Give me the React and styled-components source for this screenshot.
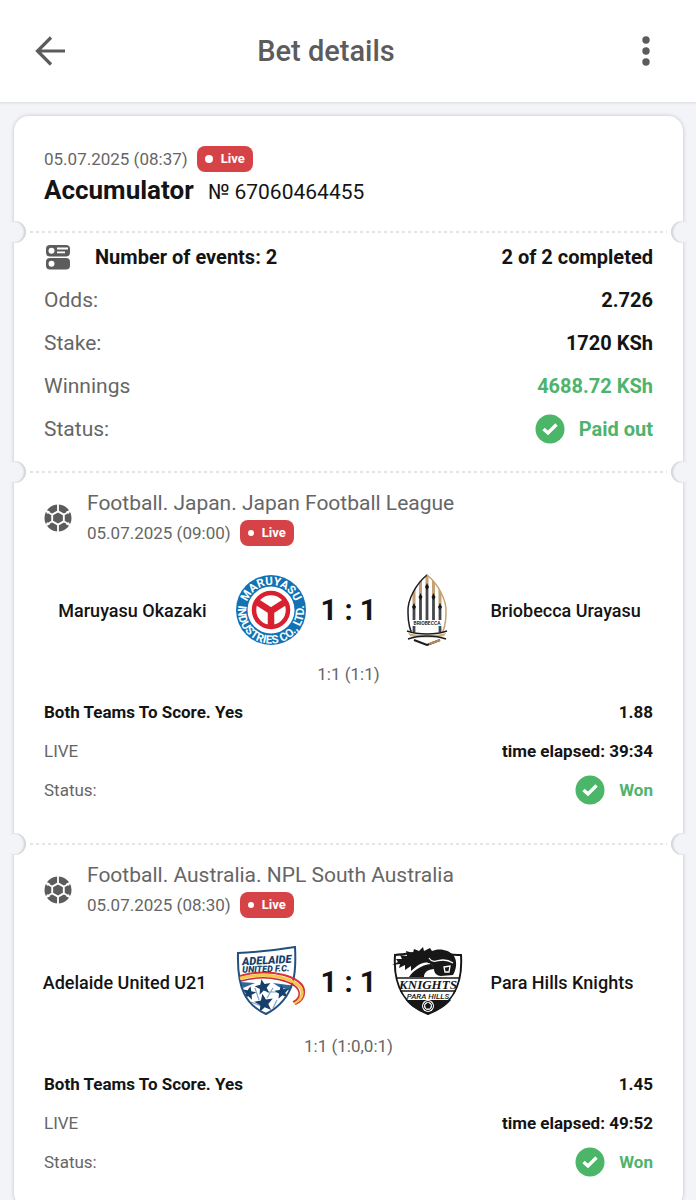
import styled, { createGlobalStyle } from 'styled-components';

const GlobalStyle = createGlobalStyle`
  *, *::before, *::after {
    box-sizing: border-box;
  }

  body {
    margin: 0;
    background: #f3f4f8;
    color: #141414;
    font-family: Roboto, sans-serif;
    font-size: 21px;
  }

  h1, h2, p, dl, dd {
    margin: 0;
  }
`

const Header = styled.header`
  display: flex;
  align-items: center;
  justify-content: space-between;
  height: 103px;
  padding: 0 30px;
  background: #fff;
  border-bottom: 1px solid #e2e3e6;
  box-shadow: 0 1px 2px rgba(0, 0, 0, 0.06);
`

const Title = styled.h1`
  font-size: 29px;
  font-weight: 500;
  line-height: 40px;
  color: #5c5c5c;
`

const IconButton = styled.button`
  display: flex;
  align-items: center;
  justify-content: center;
  width: 40px;
  height: 40px;
  padding: 0;
  border: 0;
  background: none;
  color: #5c5c5c;
  cursor: pointer;
`

const MenuButton = styled(IconButton)`
  justify-content: flex-end;
  width: 84px;
  padding-right: 15px;
`

const Ticket = styled.main`
  margin: 13px 13px 0 14px;
  padding-bottom: 27px;
  background: #fff;
  border-radius: 15px;
  box-shadow: 0 0 4px rgba(0, 0, 0, 0.2);
`

const Section = styled.section`
  padding: ${props => props.$top}px 30px 0;
`

const Divider = styled.div`
  position: relative;
  height: 2px;
  margin: ${props => props.$gap}px 0 0;
  background: repeating-linear-gradient(90deg, #e4e5e8 0 3px, transparent 3px 6px) 16px 0 / calc(100% - 32px) 2px no-repeat;

  &::before, &::after {
    content: '';
    position: absolute;
    top: -10px;
    width: 22px;
    height: 22px;
    border-radius: 50%;
    background: #f3f4f8;
  }

  &::before {
    left: -10px;
    box-shadow: inset -2px 0 2px rgba(0, 0, 0, 0.14);
  }

  &::after {
    right: -10px;
    box-shadow: inset 2px 0 2px rgba(0, 0, 0, 0.14);
  }
`

const DateLine = styled.div`
  display: flex;
  align-items: center;
  gap: 9px;
  font-size: 17px;
  line-height: 30px;
  color: #666;
`

const LiveBadge = styled.span`
  display: flex;
  align-items: center;
  gap: 8px;
  height: 26px;
  padding: 0 8px;
  border-radius: 8px;
  background: #d64347;
  color: #fff;
  font-size: 13px;
  font-weight: 700;

  &::before {
    content: '';
    width: ${props => props.$dot}px;
    height: ${props => props.$dot}px;
    border-radius: 50%;
    background: #fff;
  }
`

const BetTitle = styled.div`
  display: flex;
  align-items: baseline;
  gap: 14px;
  line-height: 32px;
`

const BetType = styled.h2`
  font-size: 26px;
  font-weight: 700;
`

const Row = styled.div`
  display: flex;
  align-items: center;
  justify-content: space-between;
  height: 43px;
`

const Label = styled.dt`
  display: flex;
  align-items: center;
  gap: 23px;
  color: #666;
`

const StrongLabel = styled(Label)`
  font-size: 20px;
  font-weight: 700;
  color: #141414;
`

const Value = styled.dd`
  display: flex;
  align-items: center;
  gap: 14px;
  font-size: 20px;
  font-weight: 700;
  color: ${props => props.$green ? '#4fb36c' : '#141414'};
`

const EventRows = styled.dl`
  ${Row} {
    height: 39px;
  }

  ${Label}, ${Value} {
    font-size: 17px;
  }
`

const EventHead = styled.div`
  display: grid;
  grid-template-columns: 28px 1fr;
  align-items: center;
  gap: 15px;
`

const League = styled.h2`
  font-size: 21px;
  font-weight: 400;
  line-height: 30px;
  color: #666;
`

const Match = styled.div`
  display: grid;
  grid-template-columns: minmax(0, 1fr) 72px 84px 72px minmax(0, 1fr);
  align-items: center;
  height: 72px;
  margin-top: 26px;
`

const Team = styled.span`
  display: flex;
  justify-content: ${props => props.$away ? 'flex-start' : 'flex-end'};
  padding: ${props => props.$away ? '0 0 0 28px' : '0 28px 0 0'};
  font-size: 18px;
  font-weight: 500;
  white-space: nowrap;
`

const Score = styled.span`
  text-align: center;
  font-size: 29px;
  font-weight: 700;
`

const Periods = styled.p`
  padding: 17px 0 7px;
  font-size: 17px;
  line-height: 22px;
  text-align: center;
  color: #666;
`

const BackIcon = () => (
  <svg width="32" height="32" viewBox="0 0 32 32" fill="none" stroke="currentColor" strokeWidth="3.200">
    <path d="M31 16H4M17 2.500L3.500 16L17 29.500" />
  </svg>
)

const MoreIcon = () => (
  <svg width="10" height="32" viewBox="0 0 10 32" fill="currentColor">
    <circle cx="5" cy="5" r="3.700" />
    <circle cx="5" cy="16" r="3.700" />
    <circle cx="5" cy="27" r="3.700" />
  </svg>
)

const EventsIcon = () => (
  <svg width="28" height="28" viewBox="0 0 28 28" fill="#5c5c5c">
    <rect x="2" y="2" width="24" height="11.500" rx="4" />
    <rect x="2" y="15" width="24" height="11.500" rx="4" />
    <circle cx="7.500" cy="7.700" r="3" fill="#fff" />
    <circle cx="7.500" cy="20.700" r="3" fill="#fff" />
    <path d="M13 5.500H24M13 9.300H21" stroke="#fff" strokeWidth="1.800" />
  </svg>
)

const CheckIcon = () => (
  <svg width="30" height="30" viewBox="0 0 30 30">
    <circle cx="15" cy="15" r="14.500" fill="#4bb568" />
    <path d="M8.500 15L13 19L21.500 10.500" fill="none" stroke="#fff" strokeWidth="3.400" />
  </svg>
)

const BallIcon = () => (
  <svg width="28" height="28" viewBox="0 0 28 28">
    <circle cx="14" cy="14" r="13.500" fill="#5c5c5c" />
    <path
      d="M14 0V7M14 21V28M1.900 7L7.900 10.500M26.100 7L20.100 10.500M1.900 21L7.900 17.500M26.100 21L20.100 17.500"
      stroke="#fff"
      strokeWidth="1.800"
    />
    <path d="M2 6L6 7.500L3 10ZM26 6L22 7.500L25 10ZM2 22L6 20.500L3 18ZM26 22L22 20.500L25 18Z" fill="#fff" />
    <path d="M14 7.300L19.800 10.600V17.400L14 20.700L8.200 17.400V10.600Z" fill="#5c5c5c" stroke="#fff" strokeWidth="1.900" />
  </svg>
)

const MaruyasuLogo = () => (
  <svg width="72" height="72" viewBox="0 0 72 72" fontFamily="Roboto" fontWeight="700" fill="#fff">
    <defs>
      <path id="maruyasu-top" d="M11 36A25 25 0 0 1 61 36" />
      <path id="maruyasu-bottom" d="M5.500 24A33 33 0 1 0 66.500 24" />
    </defs>
    <circle cx="36" cy="36" r="35" fill="#1272b4" />
    <circle cx="36" cy="36" r="23.500" />
    <circle cx="36" cy="36" r="17" fill="none" stroke="#d8202f" strokeWidth="4.500" />
    <path d="M36 36V53M36 37L22 28M36 37L50 28" stroke="#d8202f" strokeWidth="6.500" />
    <text fontSize="11.500" textAnchor="middle">
      <textPath href="#maruyasu-top" startOffset="50%">MARUYASU</textPath>
    </text>
    <text fontSize="11.500" textAnchor="middle">
      <textPath href="#maruyasu-bottom" startOffset="50%">INDUSTRIES CO., LTD.</textPath>
    </text>
  </svg>
)

const BriobeccaLogo = () => (
  <svg width="72" height="72" viewBox="0 0 72 72">
    <defs>
      <clipPath id="brio-shape">
        <path d="M36 0C46 9 56 25 55 39C54 55 50 65 36 72C22 65 18 55 17 39C16 25 26 9 36 0Z" />
      </clipPath>
    </defs>
    <g clipPath="url(#brio-shape)">
      <path d="M23 0V31M29.500 0V21M36 0V12M42.500 0V21M49 0V31" stroke="#c5a274" strokeWidth="3" />
      <path d="M23 32V58M29.500 23V50M36 12V50M42.500 23V50M49 32V58" stroke="#44474b" strokeWidth="2.800" />
      <path d="M23 29L25 33L23 36L21 33ZM29.500 19L31.500 23L29.500 26L27.500 23ZM36 9L38 13L36 16L34 13ZM42.500 19L44.500 23L42.500 26L40.500 23ZM49 29L51 33L49 36L47 33Z" fill="#17181a" />
      <rect x="16" y="46" width="40" height="6" fill="#fff" />
    </g>
    <path d="M36 1C26 9 16 25 17 39C17 48 19 57 23 64" fill="none" stroke="#1c1c1c" strokeWidth="1.500" />
    <path d="M36 1C46 9 56 25 55 39C55 48 53 57 49 64" fill="none" stroke="#c5a274" strokeWidth="1.500" />
    <text x="36" y="51" fontFamily="Roboto" fontSize="5" fontWeight="500" textAnchor="middle">BRIOBECCA</text>
    <path d="M16 56C28 61 44 61 56 56L53 62C43 66 29 66 19 62Z" fill="#fff" />
    <path d="M17 59C28 62 44 62 55 59L53 62C43 64 29 64 19 62Z" fill="#d2ae7c" />
    <path d="M16 57C27 61 45 61 56 57M17 65C28 61 44 61 55 65" fill="none" stroke="#1c1c1c" strokeWidth="1.500" />
    <path d="M23 66L36 71L49 66" fill="none" stroke="#1c1c1c" strokeWidth="2" />
    <path d="M38 70L49 66" stroke="#b98b5b" strokeWidth="2" />
  </svg>
)

const STAR = 'M0 -7L1.900 -2.300L7 -2.100L3 1.200L4.300 6L0 3.200L-4.300 6L-3 1.200L-7 -2.100L-1.900 -2.300Z'

const AdelaideLogo = () => (
  <svg width="72" height="72" viewBox="0 0 72 72">
    <defs>
      <clipPath id="adelaide-shield">
        <path d="M3 7C22 6 42 4 60 1C61 21 63 51 31 68C11 59 2 43 3 7Z" />
      </clipPath>
    </defs>
    <path d="M3 7C22 6 42 4 60 1C61 21 63 51 31 68C11 59 2 43 3 7Z" fill="#fff" />
    <g clipPath="url(#adelaide-shield)">
      <path d="M5 36L20 37L8 42ZM38 37L62 40L54 44L44 41ZM56 52L62 56L44 68L46 60ZM6 52L14 57L20 66Z" fill="#2f679c" />
      <path d="M20 42L24 54M38 42L32 52M42 54L38 62M46 46L32 46M16 56L26 60" stroke="#7fa6c8" strokeWidth="1.200" />
      <g fill="#173f6b">
        <path d={STAR} transform="translate(28 41) rotate(-12) scale(1.150)" />
        <path d={STAR} transform="translate(14 47) rotate(12)" />
        <path d={STAR} transform="translate(47 46) rotate(-8) scale(1.050)" />
        <path d={STAR} transform="translate(29 57) rotate(-10) scale(1.350)" />
      </g>
    </g>
    <path d="M3 7C22 6 42 4 60 1C61 21 63 51 31 68C11 59 2 43 3 7Z" fill="none" stroke="#23507c" strokeWidth="2" />
    <g fill="none">
      <path d="M5 30C35 21 68 31 69 44C70 51 66 56 60 58" stroke="#d8343b" strokeWidth="2" />
      <path d="M5 32.500C34 24 65 34 67 45C68 51 64 55 59 57" stroke="#f3c84b" strokeWidth="3" />
      <path d="M6 35C34 27 62 36 64 46C65 51 62 54 58 56" stroke="#c92c37" strokeWidth="1.500" />
    </g>
    <g fill="#173f6b" fontFamily="Roboto" fontWeight="900" fontStyle="italic" textAnchor="middle">
      <text x="32" y="18" fontSize="11" transform="rotate(-3 32 18)">ADELAIDE</text>
      <text x="31" y="26" fontSize="9" transform="rotate(-2 31 26)">UNITED F.C.</text>
    </g>
  </svg>
)

const KnightsLogo = () => (
  <svg width="72" height="72" viewBox="0 0 72 72">
    <path d="M4 9C18 8 28 6 37 6C48 6 58 9 70 9C72 40 60 60 37 68C14 60 2 40 4 9Z" fill="#fff" stroke="#171717" strokeWidth="2" />
    <path d="M5 32H69M9 45H65" stroke="#171717" strokeWidth="1.500" />
    <path d="M15 54H60C54 61 47 65 37 68C28 65 20 61 15 54Z" fill="#171717" />
    <path
      d="M1 19L7 16L5 13L11 13L9 9L16 10L15 5L22 7L23 3L28 5L32 1L33 5L39 2L41 5C47 2 58 3 63 10C66 15 66 22 62 29L50 30C46 30 43 27 43 23C40 15 33 15 26 20L20 25L20 20L14 24L14 19L8 22L9 18Z"
      fill="#171717"
    />
    <path d="M18 31C22 25 30 19 40 18L44 23C36 23 33 27 33 31Z" fill="#171717" />
    <path d="M38 12C42 18 46 14 52 14C56 14 59 15 62 17M53 21L59 20L58 26L54 26Z" fill="none" stroke="#fff" strokeWidth="1.300" />
    <circle cx="37" cy="60" r="6" fill="#fff" />
    <circle cx="37" cy="60" r="4.500" fill="none" stroke="#171717" />
    <path d="M37 56.500L40 59L39 62.500H35L34 59Z" fill="#171717" />
    <g fill="#171717" fontStyle="italic" textAnchor="middle">
      <text x="37" y="43" fontFamily="Liberation Serif" fontSize="13" fontWeight="700">KNIGHTS</text>
      <text x="37" y="53" fontFamily="Roboto" fontSize="8" fontWeight="500">PARA HILLS</text>
    </g>
  </svg>
)

const events = [
  {
    league: 'Football. Japan. Japan Football League',
    date: '05.07.2025 (09:00)',
    home: 'Maruyasu Okazaki',
    away: 'Briobecca Urayasu',
    HomeLogo: MaruyasuLogo,
    AwayLogo: BriobeccaLogo,
    periods: '1:1 (1:1)',
    odds: '1.88',
    elapsed: '39:34',
  },
  {
    league: 'Football. Australia. NPL South Australia',
    date: '05.07.2025 (08:30)',
    home: 'Adelaide United U21',
    away: 'Para Hills Knights',
    HomeLogo: AdelaideLogo,
    AwayLogo: KnightsLogo,
    periods: '1:1 (1:0,0:1)',
    odds: '1.45',
    elapsed: '49:52',
  },
]

function Event({ event }) {
  const { HomeLogo, AwayLogo } = event;

  return (
    <Section $top={15}>
      <EventHead>
        <BallIcon />
        <div>
          <League>{event.league}</League>
          <DateLine>
            {event.date}
            <LiveBadge $dot={6}>Live</LiveBadge>
          </DateLine>
        </div>
      </EventHead>
      <Match>
        <Team>{event.home}</Team>
        <HomeLogo />
        <Score>1 : 1</Score>
        <AwayLogo />
        <Team $away>{event.away}</Team>
      </Match>
      <Periods>{event.periods}</Periods>
      <EventRows>
        <Row>
          <StrongLabel>Both Teams To Score. Yes</StrongLabel>
          <Value>{event.odds}</Value>
        </Row>
        <Row>
          <Label>LIVE</Label>
          <Value>time elapsed: {event.elapsed}</Value>
        </Row>
        <Row>
          <Label>Status:</Label>
          <Value $green><CheckIcon /> Won</Value>
        </Row>
      </EventRows>
    </Section>
  )
}

export default function App() {
  return (
    <>
      <GlobalStyle />
      <Header>
        <IconButton aria-label="Back"><BackIcon /></IconButton>
        <Title>Bet details</Title>
        <MenuButton aria-label="More"><MoreIcon /></MenuButton>
      </Header>
      <Ticket>
        <Section $top={28}>
          <DateLine>
            05.07.2025 (08:37)
            <LiveBadge $dot={8}>Live</LiveBadge>
          </DateLine>
          <BetTitle>
            <BetType>Accumulator</BetType>
            <span>№ 67060464455</span>
          </BetTitle>
        </Section>
        <Divider $gap={23} />
        <Section $top={2}>
          <dl>
            <Row>
              <StrongLabel><EventsIcon /> Number of events: 2</StrongLabel>
              <Value>2 of 2 completed</Value>
            </Row>
            <Row>
              <Label>Odds:</Label>
              <Value>2.726</Value>
            </Row>
            <Row>
              <Label>Stake:</Label>
              <Value>1720 KSh</Value>
            </Row>
            <Row>
              <Label>Winnings</Label>
              <Value $green>4688.72 KSh</Value>
            </Row>
            <Row>
              <Label>Status:</Label>
              <Value $green><CheckIcon /> Paid out</Value>
            </Row>
          </dl>
        </Section>
        <Divider $gap={21} />
        <Event event={events[0]} />
        <Divider $gap={34} />
        <Event event={events[1]} />
      </Ticket>
    </>
  )
}
